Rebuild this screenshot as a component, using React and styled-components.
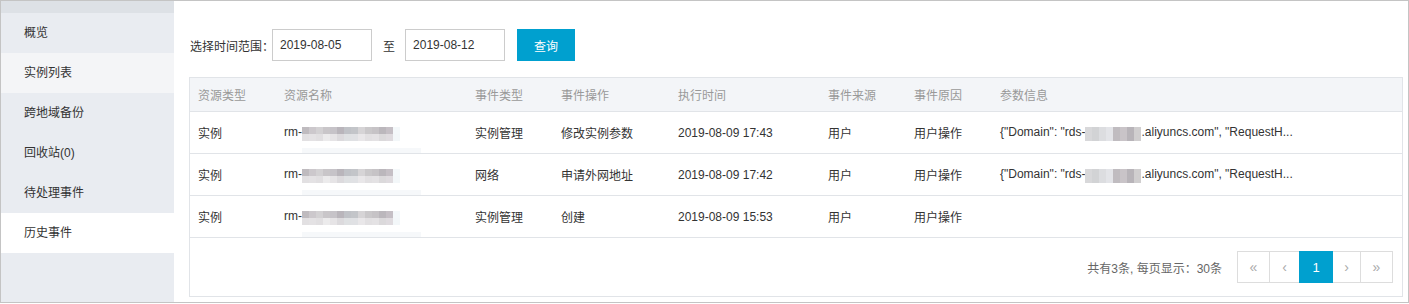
import React from "react"
import styled, { createGlobalStyle } from "styled-components"

const GlobalStyle = createGlobalStyle`
    html, body {
        margin: 0;
        padding: 0;
        background: #ffffff;
    }
    body {
        font-family: "Liberation Sans", "Noto Sans CJK SC", sans-serif;
        font-size: 12px;
        color: #333333;
    }
`

const Frame = styled.div`
    display: flex;
    width: 1409px;
    height: 303px;
    box-sizing: border-box;
    border: 1px solid #c4c4c4;
    background: #ffffff;
`

const Sidebar = styled.div`
    width: 173px;
    flex-shrink: 0;
    background: #e9ecf1;
    display: flex;
    flex-direction: column;
`

const SideTop = styled.div`
    height: 12px;
    background: #dde1e6;
`

const MenuItem = styled.div`
    height: 40px;
    line-height: 41px;
    padding-left: 23px;
    color: #333333;
    background: ${(p) => (p.active ? "#ffffff" : p.light ? "#f4f5f7" : "transparent")};
`

const Main = styled.div`
    flex: 1;
    padding: 28px 5px 0 15px;
    display: flex;
    flex-direction: column;
`

const Filter = styled.div`
    display: flex;
    align-items: center;
    height: 32px;
    margin-bottom: 16px;
`

const Label = styled.span`
    margin-left: 1px;
    margin-right: -2px;
`

const DateInput = styled.div`
    width: 100px;
    height: 32px;
    box-sizing: border-box;
    border: 1px solid #cccccc;
    padding-left: 7px;
    display: flex;
    align-items: center;
`

const To = styled.span`
    margin: 0 10px 0 11px;
`

const Search = styled.button`
    margin-left: 12px;
    width: 58px;
    height: 32px;
    border: none;
    background: #00a0cf;
    color: #ffffff;
    font-family: inherit;
    font-size: 12px;
`

const TableBox = styled.div`
    border: 1px solid #e1e4e8;
`

const Table = styled.table`
    width: 100%;
    border-collapse: collapse;
    table-layout: fixed;
`

const Th = styled.th`
    height: 33px;
    text-align: left;
    font-weight: normal;
    color: #999999;
    background: #f3f5f8;
    padding: 0 0 0 8px;
    border-bottom: 1px solid #e1e4e8;
`

const Td = styled.td`
    height: 41px;
    padding: 0 0 0 8px;
    border-bottom: 1px solid #e1e4e8;
    white-space: nowrap;
    overflow: hidden;
`

const Masked = styled.span`
    position: relative;
    display: inline-block;
    vertical-align: middle;
    width: ${(p) => p.w}px;
    height: 14px;
    margin-top: 2px;
`

const MaskRow = styled.span`
    display: flex;
    height: 7px;
`

const MaskCell = styled.span`
    width: 7px;
    height: 7px;
    flex-shrink: 0;
`

const MaskTrail = styled.span`
    position: absolute;
    left: 0;
    top: 21px;
    width: ${(p) => p.w}px;
    height: 5px;
    background: #f6f8fa;
`

const Footer = styled.div`
    height: 58px;
    display: flex;
    align-items: center;
    justify-content: flex-end;
    padding-right: 9px;
`

const Total = styled.span`
    color: #666666;
    margin-right: 16px;
`

const Pager = styled.div`
    display: flex;
`

const PageBtn = styled.div`
    width: ${(p) => p.w}px;
    height: 32px;
    box-sizing: border-box;
    border: 1px solid ${(p) => (p.active ? "#00a0cf" : "#dddddd")};
    margin-left: -1px;
    display: flex;
    align-items: center;
    justify-content: center;
    color: ${(p) => (p.active ? "#ffffff" : "#aaaaaa")};
    background: ${(p) => (p.active ? "#00a0cf" : "#ffffff")};
    font-size: ${(p) => (p.active ? "13px" : "14px")};
    position: ${(p) => (p.active ? "relative" : "static")};
`

const topTones = ["#bfbbbf", "#ccc8cc", "#d3d1d3", "#c9c6c9", "#c6c3c8", "#b9b5bb", "#c0c2c7", "#c3c5c9", "#d6d4d6", "#cac8ca", "#c6c3c6", "#bbb7bc", "#c5bfc5", "#f4f8fa", "#ffffff", "#ffffff"]
const lowTones = ["#e2e0e2", "#e4e2e4", "#e1dfe1", "#ecebec", "#e6e4e6", "#dcdadd", "#dfe1e3", "#e0e1e4", "#e9e7e9", "#e2e0e2", "#e4e2e4", "#dbd9db", "#dfdbdf", "#f3f7f9", "#ffffff", "#ffffff"]

const smallTop = ["#d8d8da", "#d2d3d5", "#dcdde0", "#e3e4e8", "#c0bcc0", "#c9c4c8", "#b8b4b9", "#d0cecf"]
const smallLow = ["#d8d8da", "#d2d3d5", "#dcdde0", "#e3e4e8", "#c0bcc0", "#c9c4c8", "#b8b4b9", "#d0cecf"]

const Blur = ({ top, low, trail }) => (
    <Masked w={top.length * 7}>
        <MaskRow>{top.map((c, i) => <MaskCell key={i} style={{ background: c }} />)}</MaskRow>
        <MaskRow>{low.map((c, i) => <MaskCell key={i} style={{ background: c }} />)}</MaskRow>
        {trail && <MaskTrail w={trail} />}
    </Masked>
)

const menu = [
    { name: "概览" },
    { name: "实例列表", light: true },
    { name: "跨地域备份" },
    { name: "回收站(0)" },
    { name: "待处理事件" },
    { name: "历史事件", active: true },
]

const rows = [
    { type: "实例管理", op: "修改实例参数", time: "2019-08-09 17:43", params: true },
    { type: "网络", op: "申请外网地址", time: "2019-08-09 17:42", params: true },
    { type: "实例管理", op: "创建", time: "2019-08-09 15:53", params: false },
]

const App = () => {
    return (
        <>
            <GlobalStyle />
            <Frame>
                <Sidebar>
                    <SideTop />
                    {menu.map((m) => (
                        <MenuItem key={m.name} active={m.active} light={m.light}>{m.name}</MenuItem>
                    ))}
                </Sidebar>
                <Main>
                    <Filter>
                        <Label>选择时间范围：</Label>
                        <DateInput>2019-08-05</DateInput>
                        <To>至</To>
                        <DateInput>2019-08-12</DateInput>
                        <Search>查询</Search>
                    </Filter>
                    <TableBox>
                        <Table>
                            <colgroup>
                                <col style={{ width: 86 }} />
                                <col style={{ width: 191 }} />
                                <col style={{ width: 86 }} />
                                <col style={{ width: 117 }} />
                                <col style={{ width: 150 }} />
                                <col style={{ width: 86 }} />
                                <col style={{ width: 86 }} />
                                <col />
                            </colgroup>
                            <thead>
                                <tr>
                                    <Th>资源类型</Th>
                                    <Th>资源名称</Th>
                                    <Th>事件类型</Th>
                                    <Th>事件操作</Th>
                                    <Th>执行时间</Th>
                                    <Th>事件来源</Th>
                                    <Th>事件原因</Th>
                                    <Th>参数信息</Th>
                                </tr>
                            </thead>
                            <tbody>
                                {rows.map((r) => (
                                    <tr key={r.time}>
                                        <Td>实例</Td>
                                        <Td>rm-<Blur top={topTones} low={lowTones} trail={119} /></Td>
                                        <Td>{r.type}</Td>
                                        <Td>{r.op}</Td>
                                        <Td>{r.time}</Td>
                                        <Td>用户</Td>
                                        <Td>用户操作</Td>
                                        <Td>
                                            {r.params && (
                                                <>{'{"Domain": "rds-'}<Blur top={smallTop} low={smallLow} />{'.aliyuncs.com", "RequestH...'}</>
                                            )}
                                        </Td>
                                    </tr>
                                ))}
                            </tbody>
                        </Table>
                        <Footer>
                            <Total>共有3条, 每页显示：30条</Total>
                            <Pager>
                                <PageBtn w={33}>«</PageBtn>
                                <PageBtn w={31}>‹</PageBtn>
                                <PageBtn w={34} active>1</PageBtn>
                                <PageBtn w={29}>›</PageBtn>
                                <PageBtn w={33}>»</PageBtn>
                            </Pager>
                        </Footer>
                    </TableBox>
                </Main>
            </Frame>
        </>
    )
}

export default App
